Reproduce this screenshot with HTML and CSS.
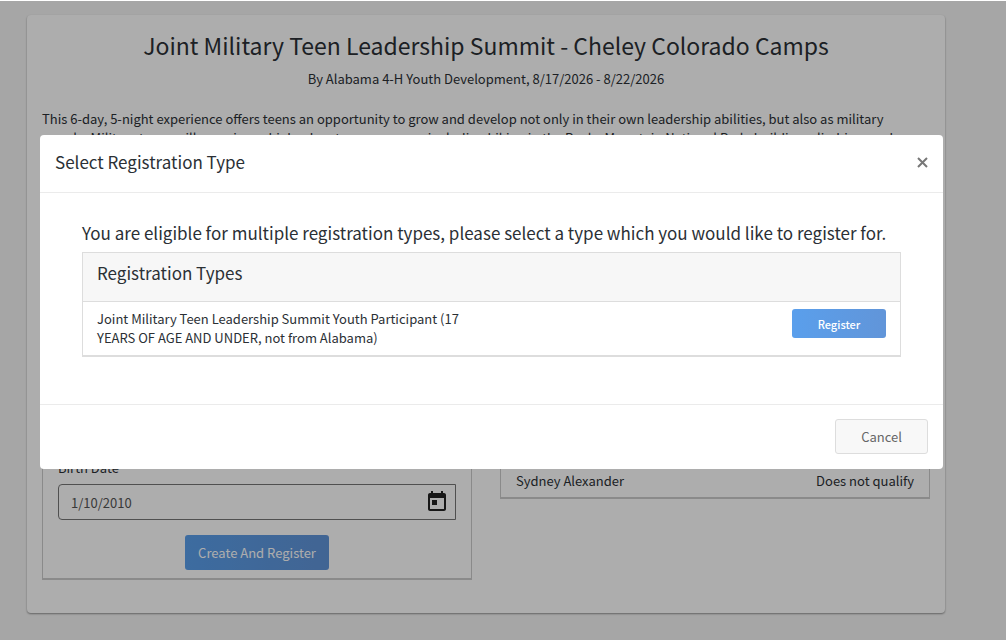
FILE: index.html
```
<!DOCTYPE html>
<html lang="en">

<head>
    <meta charset="utf-8">
    <title>Select Registration Type</title>
    <link rel="stylesheet" href="styles.css">
</head>

<body>
    <main class="event-card">
        <h1 class="event-title">Joint Military Teen Leadership Summit - Cheley Colorado Camps</h1>
        <p class="event-info">By Alabama 4-H Youth Development, 8/17/2026 - 8/22/2026</p>
        <p class="description">This 6-day, 5-night experience offers teens an opportunity to grow and develop not only in their own leadership abilities, but also as military<br>people. Military teens will experience high adventure programs, including hiking in the Rocky Mountain National Park, building, climbing, and</p>
        <div class="columns">
            <form class="panel new-person">
                <label class="field-label" for="birthDate">Birth Date</label>
                <div class="date-field">
                    <input type="text" id="birthDate" class="date-input" value="1/10/2010">
                    <button type="button" class="date-button" aria-label="Open calendar">
                        <svg width="24" height="24" viewBox="0 0 24 24">
                            <path d="M19 3h-1V1h-2v2H8V1H6v2H5c-1.100 0-2 .9-2 2v14c0 1.100.9 2 2 2h14c1.100 0 2-.9 2-2V5c0-1.100-.9-2-2-2zm0 16H5V8h14v11zM7 10h5v5H7z" />
                        </svg>
                    </button>
                </div>
                <button type="button" class="btn btn-primary btn-create">Create And Register</button>
            </form>
            <div class="panel people">
                <div class="person">
                    <span>Sydney Alexander</span>
                    <span>Does not qualify</span>
                </div>
            </div>
        </div>
    </main>

    <div class="backdrop">
        <div class="modal" role="dialog" aria-labelledby="modalTitle">
            <div class="modal-header">
                <h2 class="modal-title" id="modalTitle">Select Registration Type</h2>
                <button type="button" class="close" aria-label="Close">
                    <svg width="11" height="11" viewBox="0 0 11 11">
                        <path d="M1 1l9 9M10 1l-9 9" />
                    </svg>
                </button>
            </div>
            <div class="modal-body">
                <p class="lead">You are eligible for multiple registration types, please select a type which you would like to register for.</p>
                <div class="types">
                    <h3 class="types-header">Registration Types</h3>
                    <div class="types-row">
                        <p class="type-name">Joint Military Teen Leadership Summit Youth Participant (17 YEARS OF AGE AND UNDER, not from Alabama)</p>
                        <button type="button" class="btn btn-primary btn-register">Register</button>
                    </div>
                </div>
            </div>
            <div class="modal-footer">
                <button type="button" class="btn btn-cancel">Cancel</button>
            </div>
        </div>
    </div>
</body>

</html>
```
FILE: styles.css
```
* {
    box-sizing: border-box;
}

body {
    margin: 0;
    padding: 14px 61px 0 27px;
    border-top: 1px solid #fff;
    min-height: 100vh;
    background-color: #f5f5f5;
    color: #2b3035;
    font-family: "Noto Sans CJK SC", "Open Sans", sans-serif;
    font-size: 13px;
    line-height: 19px;
}

h1,
h2,
h3,
p {
    margin: 0;
    font-weight: 400;
}

button,
input {
    font-family: inherit;
    font-size: inherit;
}

.event-card {
    padding: 13px 15px 33px;
    border-radius: 4px;
    background-color: #fff;
    box-shadow: 0 1px 2px rgba(0, 0, 0, 0.4);
}

.event-title {
    font-size: 23px;
    line-height: 34px;
    text-align: center;
}

.event-info {
    margin-top: 7px;
    text-align: center;
}

.description {
    margin-top: 21px;
}

.columns {
    display: grid;
    grid-template-columns: 1fr 1fr;
    gap: 28px;
    align-items: start;
    margin-top: 41px;
}

.panel {
    border: 1px solid #ccc;
    border-bottom-width: 2px;
    padding: 0 15px;
}

.new-person {
    padding-top: 269px;
    padding-bottom: 8px;
}

.field-label {
    display: block;
}

.date-field {
    display: flex;
    align-items: center;
    margin-top: 7px;
    height: 36px;
    border: 1px solid #777;
    border-radius: 4px 0 0 4px;
}

.date-input {
    flex: 1;
    min-width: 0;
    padding: 0 12px;
    border: 0;
    background: none;
    color: #555;
}

.date-button {
    display: flex;
    padding: 0 6px 0 0;
    border: 0;
    background: none;
    fill: #222;
}

.btn {
    border: 1px solid transparent;
    border-radius: 3px;
    text-align: center;
}

.btn-primary {
    border: 0;
    color: #fff;
    background: linear-gradient(to right, #5a9fec, #6195d9);
}

.btn-create {
    display: block;
    margin: 15px auto 0;
    padding: 0 13px;
    height: 35px;
}

.people {
    padding-top: 282px;
}

.person {
    display: flex;
    justify-content: space-between;
    padding-bottom: 7px;
}

/* dimmed layer over the whole page */
.backdrop {
    position: fixed;
    top: 1px;
    right: 0;
    bottom: 0;
    left: 0;
    padding: 134px 63px 0 40px;
    background-color: rgba(0, 0, 0, 0.32);
}

.modal {
    border-radius: 4px;
    background-color: #fff;
}

.modal-header {
    display: flex;
    align-items: center;
    justify-content: space-between;
    padding: 14px 15px 17px;
    border-bottom: 1px solid #ebebeb;
}

.modal-title {
    font-size: 17px;
    line-height: 26px;
}

.close {
    display: flex;
    padding: 0;
    border: 0;
    background: none;
    stroke: #777;
    stroke-width: 2;
}

.modal-body {
    padding: 27px 42px 47px;
}

.lead {
    font-size: 17px;
    line-height: 26px;
}

.types {
    margin-top: 6px;
    border: 1px solid #ddd;
    border-bottom-width: 2px;
}

.types-header {
    padding: 7px 14px 15px;
    border-bottom: 1px solid #ddd;
    background-color: #f7f7f7;
    font-size: 17px;
    line-height: 26px;
}

.types-row {
    display: flex;
    align-items: flex-start;
    justify-content: space-between;
    padding: 7px 14px 8px;
}

.type-name {
    width: 48%;
}

.btn-register {
    min-width: 94px;
    height: 29px;
    font-size: 11px;
    font-weight: 500;
}

.modal-footer {
    display: flex;
    justify-content: flex-end;
    padding: 14px 15px 15px;
    border-top: 1px solid #ebebeb;
}

.btn-cancel {
    padding: 0 25px;
    height: 35px;
    border-color: #ddd;
    background-color: #f8f8f8;
    color: #666;
}
```
